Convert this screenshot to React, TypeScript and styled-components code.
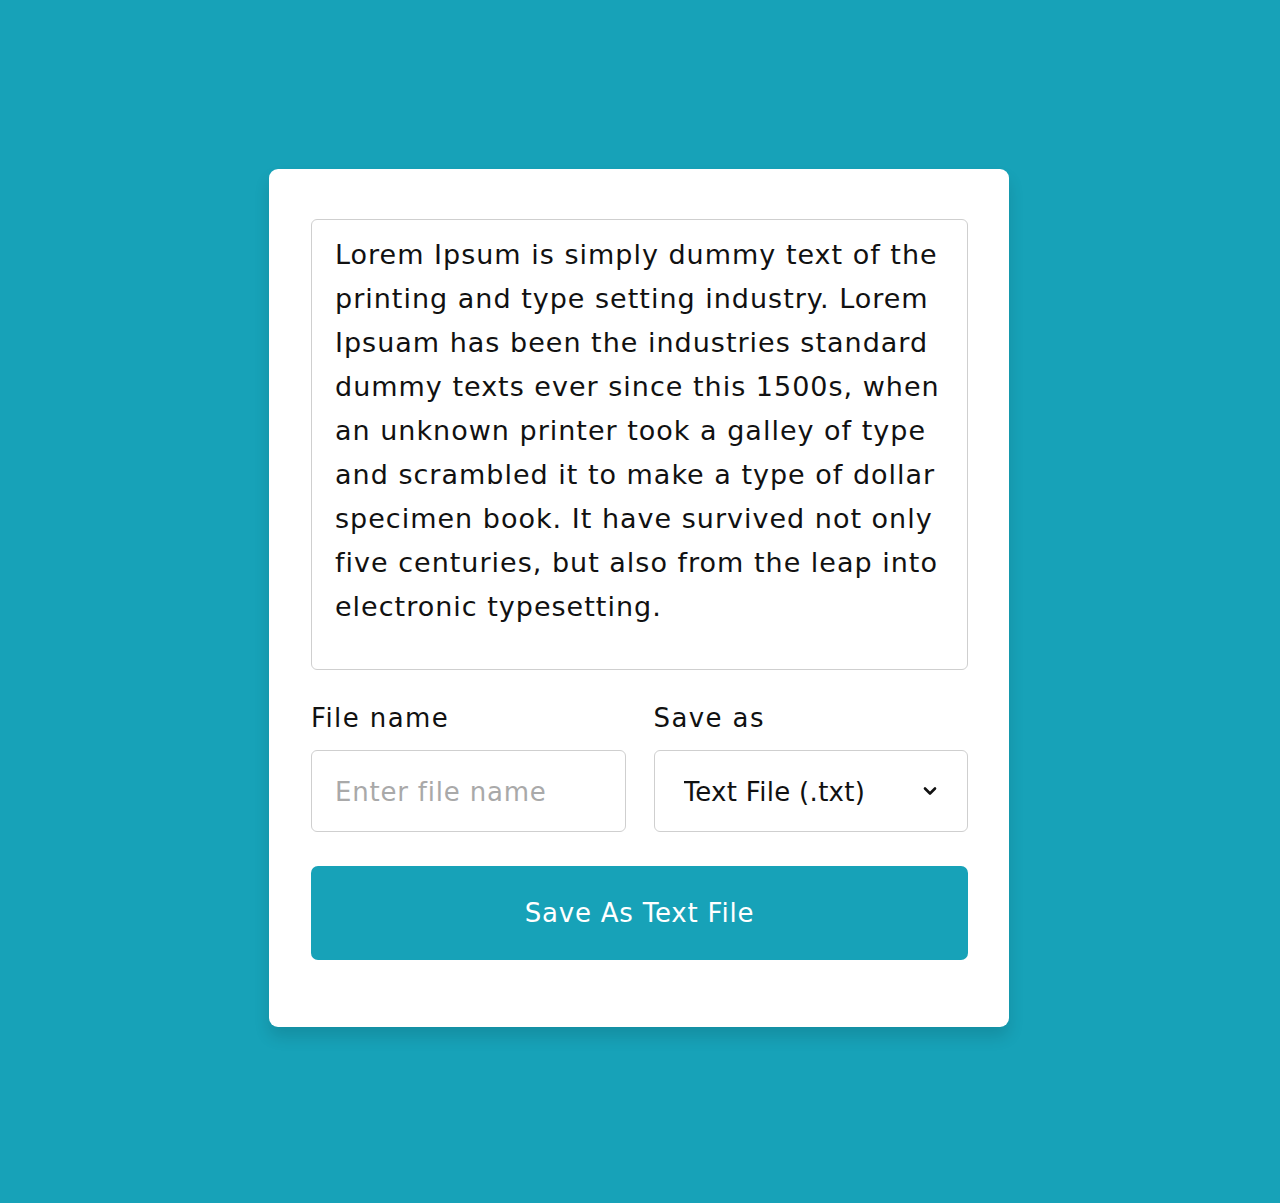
import React from "react";
import styled, { createGlobalStyle } from "styled-components";

const Global = createGlobalStyle`
  html, body { margin: 0; padding: 0; }
  body {
    background: #17a2b8;
    font-family: "DejaVu Sans", "Noto Sans", sans-serif;
  }
  * { box-sizing: border-box; }
`;

const Page = styled.div`
  min-height: 1203px;
  display: flex;
  align-items: center;
  justify-content: center;
  padding: 0 2px 8px 0;
`;

const Card = styled.div`
  width: 740px;
  background: #fff;
  border-radius: 9px;
  padding: 50px 41px 67px 42px;
  box-shadow: 0 10px 16px rgba(0, 0, 0, 0.12);
  display: flex;
  flex-direction: column;
`;

const TextArea = styled.textarea`
  width: 100%;
  height: 451px;
  resize: none;
  border: 1.5px solid #cfcfcf;
  border-radius: 6px;
  padding: 13px 18px 12px 23px;
  font-family: inherit;
  font-size: 27px;
  line-height: 44px;
  letter-spacing: 1px;
  color: #111;
  outline: none;
`;

const Row = styled.div`
  display: grid;
  grid-template-columns: 1fr 1fr;
  column-gap: 28px;
  margin-top: 30px;
`;

const Field = styled.div`
  display: flex;
  flex-direction: column;
`;

const Label = styled.label`
  font-size: 26px;
  line-height: 36px;
  letter-spacing: 1.4px;
  color: #111;
  margin-bottom: 14px;
`;

const Input = styled.input`
  height: 82px;
  width: 100%;
  border: 1.5px solid #cfcfcf;
  border-radius: 6px;
  padding: 2px 23px 0;
  font-family: inherit;
  font-size: 26px;
  letter-spacing: 0.8px;
  color: #111;
  outline: none;
  &::placeholder { color: #a9a9a9; }
`;

const SelectWrap = styled.div`
  position: relative;
  height: 82px;
  border: 1.5px solid #cfcfcf;
  border-radius: 6px;
  display: flex;
  align-items: center;
`;

const Select = styled.select`
  appearance: none;
  -webkit-appearance: none;
  width: 100%;
  height: 100%;
  border: none;
  background: transparent;
  padding: 3px 60px 0 29px;
  font-family: inherit;
  font-size: 26px;
  letter-spacing: 0.3px;
  color: #111;
  outline: none;
`;

const Chevron = styled.svg`
  position: absolute;
  right: 30px;
  top: 50%;
  transform: translateY(-50%);
  pointer-events: none;
`;

const Button = styled.button`
  margin-top: 34px;
  height: 94px;
  width: 100%;
  border: none;
  border-radius: 7px;
  background: #17a2b8;
  color: #fff;
  font-family: inherit;
  font-size: 26px;
  letter-spacing: 0.8px;
  cursor: pointer;
`;

const text =
  "Lorem Ipsum is simply dummy text of the printing and type setting industry. Lorem Ipsuam has been the industries standard dummy texts ever since this 1500s, when an unknown printer took a galley of type and scrambled it to make a type of dollar specimen book. It have survived not only five centuries, but also from the leap into electronic typesetting.";

export default function App() {
  return (
    <>
      <Global />
      <Page>
        <Card>
          <TextArea defaultValue={text} spellCheck={false} />
          <Row>
            <Field>
              <Label>File name</Label>
              <Input placeholder="Enter file name" />
            </Field>
            <Field>
              <Label>Save as</Label>
              <SelectWrap>
                <Select defaultValue="txt">
                  <option value="txt">Text File (.txt)</option>
                  <option value="js">JavaScript File (.js)</option>
                  <option value="html">HTML File (.html)</option>
                </Select>
                <Chevron width="14" height="10" viewBox="0 0 14 10">
                  <path d="M2 2.5 L7 7.5 L12 2.5" fill="none" stroke="#111" strokeWidth="2.6" strokeLinecap="round" strokeLinejoin="round" />
                </Chevron>
              </SelectWrap>
            </Field>
          </Row>
          <Button>Save As Text File</Button>
        </Card>
      </Page>
    </>
  );
}
